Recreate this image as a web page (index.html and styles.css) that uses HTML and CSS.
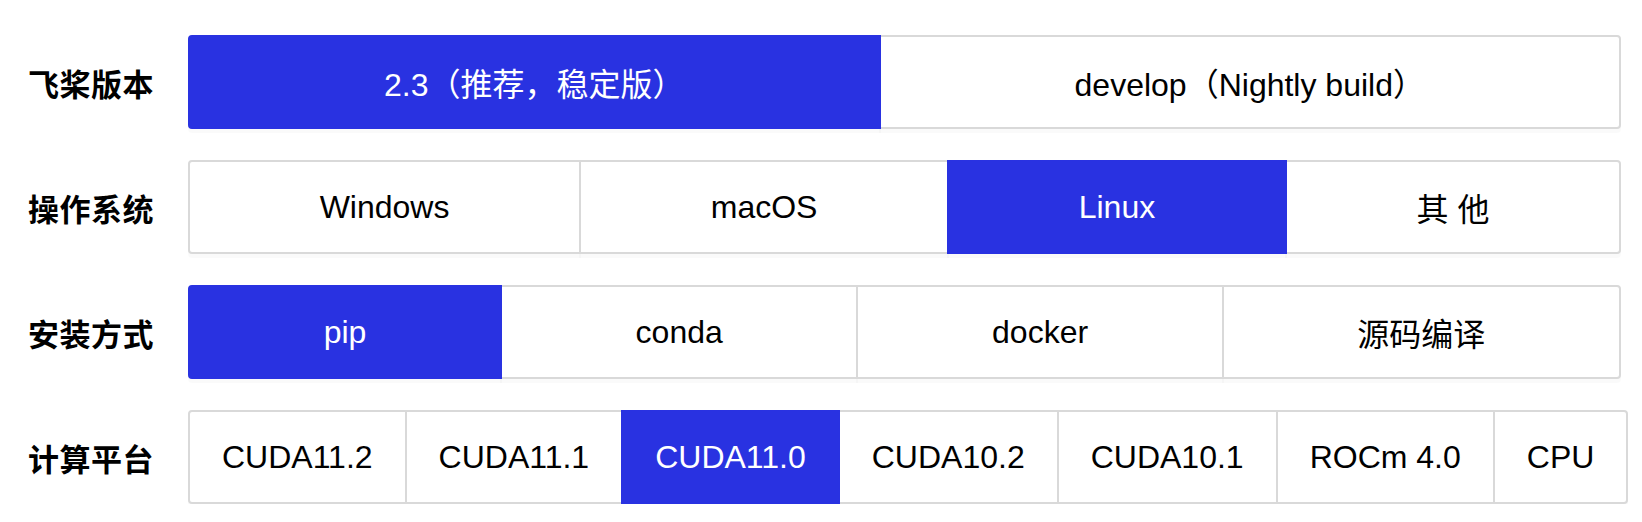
FILE: index.html
```html
<!DOCTYPE html>
<html lang="zh-CN">
<head>
<meta charset="utf-8">
<title>安装选项</title>
<link rel="stylesheet" href="styles.css">
</head>
<body>
<div class="selector">
  <div class="row">
    <div class="label">飞桨版本</div>
    <div class="group">
      <div class="opt checked">2.3（推荐，稳定版）</div>
      <div class="opt">develop（Nightly build）</div>
    </div>
  </div>
  <div class="row">
    <div class="label">操作系统</div>
    <div class="group">
      <div class="opt">Windows</div>
      <div class="opt">macOS</div>
      <div class="opt checked">Linux</div>
      <div class="opt">其 他</div>
    </div>
  </div>
  <div class="row">
    <div class="label">安装方式</div>
    <div class="group">
      <div class="opt checked">pip</div>
      <div class="opt">conda</div>
      <div class="opt">docker</div>
      <div class="opt">源码编译</div>
    </div>
  </div>
  <div class="row">
    <div class="label">计算平台</div>
    <div class="group">
      <div class="opt">CUDA11.2</div>
      <div class="opt">CUDA11.1</div>
      <div class="opt checked">CUDA11.0</div>
      <div class="opt">CUDA10.2</div>
      <div class="opt">CUDA10.1</div>
      <div class="opt">ROCm 4.0</div>
      <div class="opt">CPU</div>
    </div>
  </div>
</div>
</body>
</html>
```

FILE: styles.css
```css
html, body {
  margin: 0;
  padding: 0;
  background: #ffffff;
}

body {
  font-family: "Liberation Sans", "Noto Sans CJK SC", sans-serif;
  color: #000000;
}

.selector {
  display: flex;
  flex-direction: column;
  gap: 31px;
  padding: 35px 21px 0 28px;
}

.row {
  display: flex;
  align-items: center;
}

.label {
  width: 160px;
  flex: none;
  font-family: "Noto Sans CJK SC", sans-serif;
  font-weight: 700;
  font-size: 31px;
  letter-spacing: 0.5px;
  color: #000000;
}

.group {
  flex: 1;
  display: flex;
  min-width: 0;
}

.opt {
  flex: 1 1 auto;
  height: 94px;
  box-sizing: border-box;
  display: flex;
  align-items: center;
  justify-content: center;
  padding: 0 32px;
  border: 2px solid #d9d9d9;
  margin-left: -2px;
  background: #ffffff;
  font-size: 32px;
  white-space: nowrap;
  box-shadow: 0 4px 0 rgba(0, 0, 0, 0.018);
}

.opt:first-child {
  margin-left: 0;
  border-radius: 4px 0 0 4px;
}

.opt:last-child {
  border-radius: 0 4px 4px 0;
}

.opt.checked {
  position: relative;
  z-index: 1;
  background: #2932e1;
  border-color: #2932e1;
  color: #ffffff;
}
```
